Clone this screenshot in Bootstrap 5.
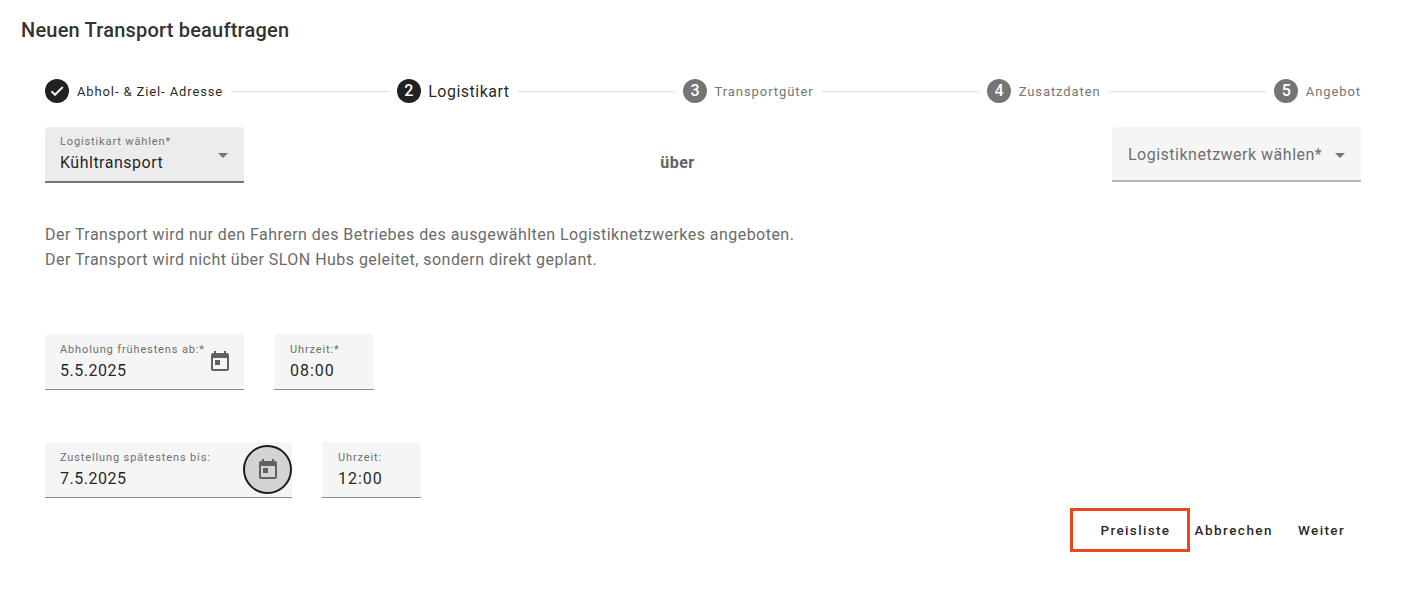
<!DOCTYPE html>
<html lang="de">
<head>
<meta charset="utf-8">
<title>Neuen Transport beauftragen</title>
<link href="https://cdn.jsdelivr.net/npm/bootstrap@5.3.0/dist/css/bootstrap.min.css" rel="stylesheet">
<style>
html,body{height:594px;overflow:hidden;background:#fff}
body{font-family:Roboto,"Liberation Sans",sans-serif;color:rgba(0,0,0,.87)}
.page-wrap{padding:21px 40px 0 21px;width:1401px}
.page-title{font-size:20px;font-weight:500;line-height:18px;margin:0;height:18px;letter-spacing:.2px;color:#333}
.stepper{margin:40px 0 0 24px;height:24px}
.step-dot{width:24px;height:24px;border-radius:50%;background:#757575;color:#fff;font-size:16px;font-weight:500;flex:none;line-height:24px;text-align:center}
.step-dot.on{background:#212121}
.step-label{font-size:13px;letter-spacing:.92px;color:#757575;margin-left:7.5px;white-space:nowrap;line-height:20px;padding-top:1px}
.step-label.first{color:rgba(0,0,0,.87);margin-left:8px;letter-spacing:.88px}
.step-label.active{font-size:16px;color:rgba(0,0,0,.87);letter-spacing:.5px}
.step-line{flex:1 1 0;height:1px;background:#dcdcdc;margin:0 8px}
.body-wrap{margin-left:24px}
.sel-row{margin-top:24px;height:56px}
.fld{background:#f5f5f5;border-radius:4px 4px 0 0;border-bottom:1px solid #8c8c8c;height:56px;position:relative;padding:9px 16px 0}
.fld-label{font-size:11px;line-height:14px;letter-spacing:.87px;color:#6f6f6f;white-space:nowrap}
.fld-value{font-size:16px;line-height:24px;letter-spacing:.5px;color:rgba(0,0,0,.87);margin-top:2px;white-space:nowrap}
.fld-value.time{letter-spacing:1px}
.fld-w1{width:199px;padding-left:15px}.fld-w2{width:100px}.fld-w2b{width:99px}.fld-w3{width:247px;padding-left:15px}
.fld-sel{background:#ececec;border-bottom:2px solid #757575;padding-top:8px}
.fld-net{width:249px;border-bottom-color:#b5b5b5;border-bottom-width:2px;height:55px;padding:3px 16px 0;font-size:16px;letter-spacing:.5px;color:#6f6f6f}
.caret-down{width:0;height:0;border-left:5px solid transparent;border-right:5px solid transparent;border-top:5px solid #757575}
.fld .caret-pos{position:absolute;right:16px;top:26px}
.ueber{font-size:16px;font-weight:700;letter-spacing:.45px;color:#616161;margin-left:-1px;padding-top:24px}
.hint{margin:39px 0 0;font-size:16px;line-height:25px;letter-spacing:.46px;color:#6b6b6b}
.date-row{gap:30px}
.date-row.r1{margin-top:62px}
.date-row.r2{margin-top:52px}
.cal-btn{position:absolute;color:#616161;display:flex;align-items:center;justify-content:center}
.cal-btn.plain{right:12px;top:16px;width:24px;height:24px}
.cal-btn.focus{right:0;top:3px;width:49px;height:49px;border-radius:50%;background:#d3d3d3;border:2px solid #1c1c1c}
.actions{margin-top:10px;height:44px}
.act-btn{background:none;border:0;padding:0;color:rgba(0,0,0,.87);font-weight:500;letter-spacing:1.35px;font-size:13.5px;line-height:20px}
.act-mark{border:3px solid #e8481c;width:120px;height:44px;padding:0 0 0 28px;text-align:left}
.act-a{margin-left:5px;margin-right:25px;letter-spacing:1.47px}
.act-w{margin-right:16px}
</style>
</head>
<body>
<div class="page-wrap">
  <h1 class="page-title">Neuen Transport beauftragen</h1>
  <div class="stepper d-flex align-items-center">
    <div class="step-dot on d-flex align-items-center justify-content-center">
      <svg width="16" height="16" viewBox="0 0 24 24" fill="#fff" stroke="#fff" stroke-width="1.2"><path d="M9 16.2 4.800 12l-1.400 1.400L9 19 21 7l-1.400-1.400z"/></svg>
    </div>
    <span class="step-label first">Abhol- &amp; Ziel- Adresse</span>
    <div class="step-line"></div>
    <div class="step-dot on">2</div>
    <span class="step-label active">Logistikart</span>
    <div class="step-line"></div>
    <div class="step-dot">3</div>
    <span class="step-label">Transportgüter</span>
    <div class="step-line"></div>
    <div class="step-dot">4</div>
    <span class="step-label">Zusatzdaten</span>
    <div class="step-line"></div>
    <div class="step-dot">5</div>
    <span class="step-label">Angebot</span>
  </div>
  <div class="body-wrap">
    <div class="sel-row d-flex justify-content-between align-items-start">
      <div class="fld fld-sel fld-w1">
        <div class="fld-label">Logistikart wählen*</div>
        <div class="fld-value">Kühltransport</div>
        <span class="caret-down caret-pos"></span>
      </div>
      <div class="ueber">über</div>
      <div class="fld fld-net d-flex align-items-center justify-content-between">
        <span>Logistiknetzwerk wählen*</span>
        <span class="caret-down"></span>
      </div>
    </div>
    <p class="hint">Der Transport wird nur den Fahrern des Betriebes des ausgewählten Logistiknetzwerkes angeboten.<br>Der Transport wird nicht über SLON Hubs geleitet, sondern direkt geplant.</p>
    <div class="date-row r1 d-flex">
      <div class="fld fld-w1">
        <div class="fld-label">Abholung frühestens ab:*</div>
        <div class="fld-value">5.5.2025</div>
        <span class="cal-btn plain">
          <svg width="24" height="24" viewBox="0 0 24 24" fill="currentColor"><path d="M19 3h-1V1h-2v2H8V1H6v2H5c-1.110 0-1.990.9-1.990 2L3 19c0 1.100.89 2 2 2h14c1.100 0 2-.9 2-2V5c0-1.100-.9-2-2-2zm0 16H5V8h14v11zM7 10h5v5H7z"/></svg>
        </span>
      </div>
      <div class="fld fld-w2">
        <div class="fld-label">Uhrzeit:*</div>
        <div class="fld-value time">08:00</div>
      </div>
    </div>
    <div class="date-row r2 d-flex">
      <div class="fld fld-w3">
        <div class="fld-label">Zustellung spätestens bis:</div>
        <div class="fld-value">7.5.2025</div>
        <span class="cal-btn focus">
          <svg width="24" height="24" viewBox="0 0 24 24" fill="currentColor"><path d="M19 3h-1V1h-2v2H8V1H6v2H5c-1.110 0-1.990.9-1.990 2L3 19c0 1.100.89 2 2 2h14c1.100 0 2-.9 2-2V5c0-1.100-.9-2-2-2zm0 16H5V8h14v11zM7 10h5v5H7z"/></svg>
        </span>
      </div>
      <div class="fld fld-w2b">
        <div class="fld-label">Uhrzeit:</div>
        <div class="fld-value time">12:00</div>
      </div>
    </div>
    <div class="actions d-flex justify-content-end align-items-center">
      <button type="button" class="act-btn act-mark">Preisliste</button>
      <button type="button" class="act-btn act-a">Abbrechen</button>
      <button type="button" class="act-btn act-w">Weiter</button>
    </div>
  </div>
</div>
<script src="https://cdn.jsdelivr.net/npm/bootstrap@5.3.0/dist/js/bootstrap.bundle.min.js"></script>
</body>
</html>
